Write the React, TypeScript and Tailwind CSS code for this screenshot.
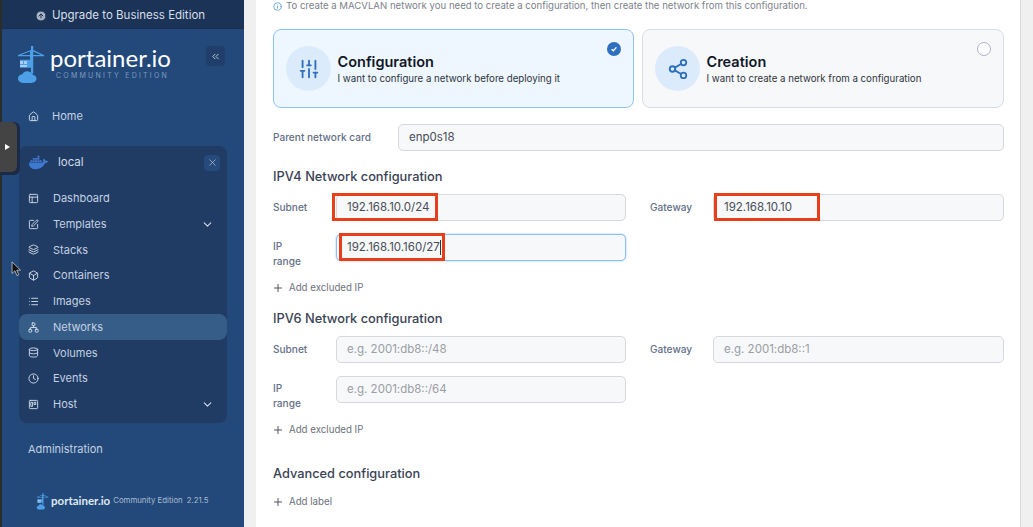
import {
  Box,
  ChevronDown,
  ChevronsLeft,
  CircleArrowUp,
  Clock,
  Database,
  House,
  Info,
  Layers,
  List,
  Network,
  PanelsTopLeft,
  Plus,
  Share2,
  SlidersVertical,
  SquarePen,
  Trello,
  X,
} from 'lucide-react';
import { FaDocker } from 'react-icons/fa';

function CraneLogo({ className }: { className: string }) {
  return (
    <svg viewBox="0 0 28 38" className={className} fill="#4d9fe8">
      <path d="M14 0v4L1 9v1.2h12v3.5H3v8h11v6h2.2V10.2H27V9L16.200 4V0zM4 9l9-3.600V9zM16.200 5.400 24 9h-7.800z" />
      <path d="M3 15h3v3H3zM7 15h3v3H7zM3 19h7v2H3z" fill="#a9cdf0" />
      <path d="M7 37c-3.500 0-6-1.800-6-4.500 0-2.400 2-4 4.300-4.200C6.500 26 9 25 11.500 25.500c2 .4 3.500 1.600 4.100 3.200 2.200.2 3.900 1.800 3.900 3.900 0 2.600-2.300 4.400-5.500 4.400z" />
    </svg>
  );
}

function NavItem({
  icon: Icon,
  label,
  active,
  chevron,
}: {
  icon: typeof Box;
  label: string;
  active?: boolean;
  chevron?: boolean;
}) {
  return (
    <div
      className={`flex items-center h-[25.750px] pl-[9px] pr-[13px] rounded-lg ${active ? 'bg-[#365d88]' : ''}`}
    >
      <Icon className="w-[11px] h-[11px] text-[#d3deea]" strokeWidth={2} />
      <span className="ml-[14px] text-[11px] text-[#c3d1e2]">{label}</span>
      {chevron && <ChevronDown className="w-[13px] h-[13px] ml-auto text-[#d5deea]" />}
    </div>
  );
}

function Sidebar() {
  return (
    <aside className="w-[242px] shrink-0 bg-[#23497a] flex flex-col">
      <div className="h-[29px] pt-[4px] pr-[6px] bg-[#1b3356] border-b border-[#1a2f50] flex items-center justify-center gap-[5px] text-[11.500px] text-[#d6dfe9]">
        <CircleArrowUp className="w-[12px] h-[12px] text-[#1b3356] fill-[#a9b5c5]" />
        Upgrade to Business Edition
      </div>

      <div className="flex items-start pl-[15px] pr-[19px] mt-[17px] h-[40px]">
        <CraneLogo className="w-[28px] h-[38px]" />
        <div className="ml-[5px] flex flex-col items-start">
          <span className="font-['Lato',sans-serif] text-[24px] leading-[26px] text-white -mt-[1px]">portainer.io</span>
          <span className="text-[7px] leading-[9px] tracking-[0.320em] text-[#7e9ac0] ml-[6px] whitespace-nowrap">COMMUNITY EDITION</span>
        </div>
        <button className="ml-auto w-[19px] h-[20px] rounded bg-[#1f3e69] flex items-center justify-center">
          <ChevronsLeft className="w-[11px] h-[11px] text-[#c6d3e3]" />
        </button>
      </div>

      <div className="flex items-center pl-[26px] mt-[17px] h-[26px]">
        <House className="w-[11px] h-[11px] text-[#d3deea]" />
        <span className="ml-[13px] text-[11px] text-[#c3d1e2]">Home</span>
      </div>

      <div className="mx-[17px] mt-[17px] h-[277px] bg-[#203c64] rounded-lg">
        <div className="flex items-center h-[33px] mb-[6.500px] pl-[10px] pr-[7px]">
          <FaDocker className="w-[19px] h-[19px] text-[#3f78d0]" />
          <span className="ml-[10px] text-[11.500px] text-[#d0dbe8]">local</span>
          <span className="ml-auto w-[16px] h-[16px] rounded bg-[#264a7c] flex items-center justify-center">
            <X className="w-[11px] h-[11px] text-[#b9c8da]" strokeWidth={1.5} />
          </span>
        </div>
        <NavItem icon={PanelsTopLeft} label="Dashboard" />
        <NavItem icon={SquarePen} label="Templates" chevron />
        <NavItem icon={Layers} label="Stacks" />
        <NavItem icon={Box} label="Containers" />
        <NavItem icon={List} label="Images" />
        <NavItem icon={Network} label="Networks" active />
        <NavItem icon={Database} label="Volumes" />
        <NavItem icon={Clock} label="Events" />
        <NavItem icon={Trello} label="Host" chevron />
      </div>

      <div className="pl-[26px] mt-[17px] text-[11px] leading-[18px] text-[#c3d1e2]">Administration</div>

      <div className="flex items-center pl-[34px] mt-[34px] h-[18px]">
        <CraneLogo className="w-[13px] h-[17px]" />
        <span className="ml-[2px] font-['Lato',sans-serif] font-bold text-[11.500px] text-[#dfe7f0]">portainer.io</span>
        <span className="ml-[3px] text-[7.800px] text-[#a9bbd2]">Community Edition</span>
        <span className="ml-[4px] text-[7.800px] text-[#a9bbd2]">2.21.5</span>
      </div>
    </aside>
  );
}

function OptionCard({
  icon: Icon,
  title,
  subtitle,
  selected,
}: {
  icon: typeof Box;
  title: string;
  subtitle: string;
  selected?: boolean;
}) {
  return (
    <div
      className={`relative h-[79px] rounded-lg border flex items-center pl-[12px] ${
        selected ? 'bg-[#eef6ff] border-[#8cc4f5]' : 'bg-[#f7f8fa] border-[#d9dde5]'
      }`}
    >
      <div className="w-[45px] h-[45px] rounded-full bg-[#dcebfc] flex items-center justify-center">
        <Icon className="w-[22px] h-[22px] text-[#2f6fc0]" strokeWidth={2} />
      </div>
      <div className="ml-[6.500px]">
        <div className="text-[14.500px] leading-[20px] font-semibold text-[#111827]">{title}</div>
        <div className="text-[9.700px] leading-[14px] text-[#2f343d]">{subtitle}</div>
      </div>
      {selected ? (
        <span className="absolute right-[12px] top-[12px] w-[14px] h-[14px] rounded-full bg-[#2f6fc0] flex items-center justify-center">
          <svg viewBox="0 0 10 10" className="w-[8px] h-[8px]" fill="none" stroke="white" strokeWidth="1.600">
            <path d="M2 5.200 4.200 7.200 8 3" />
          </svg>
        </span>
      ) : (
        <span className="absolute right-[12px] top-[12px] w-[14px] h-[14px] rounded-full bg-white border border-[#aeb4c0]" />
      )}
    </div>
  );
}

function Field({
  label,
  value,
  placeholder,
  focused,
  wrap,
  labelWidth = 'w-[63px]',
}: {
  label: string;
  value?: string;
  placeholder?: string;
  focused?: boolean;
  wrap?: boolean;
  labelWidth?: string;
}) {
  return (
    <div className="flex items-start h-[27px]">
      <div className={`${labelWidth} shrink-0 text-[10.100px] font-medium text-[#646f87] ${wrap ? 'leading-[14.500px] pt-[5px] pr-[30px]' : 'leading-[27px]'}`}>
        {label}
      </div>
      <div
        className={`flex-1 h-[27px] rounded-[5px] bg-[#f7f8fa] border flex items-center pl-[10px] text-[11.500px] ${
          focused ? 'border-[#8cc0f3] shadow-[0_0_2px_#8cc0f3]' : 'border-[#d6d8dd]'
        } ${value ? 'text-[#474d58]' : 'text-[#9b9ea5]'}`}
      >
        {value ?? placeholder}
        {focused && <span className="w-px h-[15px] bg-[#333]" />}
      </div>
    </div>
  );
}

function AddLink({ label }: { label: string }) {
  return (
    <div className="flex items-center h-[14px] text-[9.700px] text-[#6c717b]">
      <Plus className="w-[12px] h-[12px] -ml-[1px] text-[#4e535c] mr-[5px]" />
      {label}
    </div>
  );
}

function Heading({ children }: { children: string }) {
  return <h3 className="text-[12.800px] leading-[18px] font-medium text-[#3a4255]">{children}</h3>;
}

function RedBox({ className }: { className: string }) {
  return <div className={`absolute border-[3px] border-[#e83f1b] ${className}`} />;
}

export default function App() {
  return (
    <div className="relative w-[1033px] h-[527px] overflow-hidden flex bg-[#f0f0f0] font-['Inter',sans-serif]">
      <div className="w-[2px] shrink-0 bg-[#2c2c2c]" />
      <Sidebar />

      <main className="ml-[12px] w-[765px] shrink-0 bg-white border-r border-[#d8d8d8] pl-[17px] pr-[16px]">
        <div className="flex items-center h-[11px] mt-[1px] text-[9.600px] text-[#7d828c]">
          <Info className="w-[9px] h-[9px] text-[#4a90d9] mr-[4px]" />
          To create a MACVLAN network you need to create a configuration, then create the network from this configuration.
        </div>

        <div className="grid grid-cols-[361px_1fr] gap-x-[8px] mt-[17px]">
          <OptionCard icon={SlidersVertical} title="Configuration" subtitle="I want to configure a network before deploying it" selected />
          <OptionCard icon={Share2} title="Creation" subtitle="I want to create a network from a configuration" />
        </div>

        <div className="mt-[16px]">
          <Field label="Parent network card" value="enp0s18" labelWidth="w-[125px]" />
        </div>

        <div className="mt-[17px]">
          <Heading>IPV4 Network configuration</Heading>
        </div>
        <div className="grid grid-cols-[353px_1fr] gap-x-[24px] mt-[8px]">
          <Field label="Subnet" value="192.168.10.0/24" />
          <Field label="Gateway" value="192.168.10.10" />
        </div>
        <div className="grid grid-cols-[353px_1fr] gap-x-[24px] mt-[13px]">
          <Field label="IP range" value="192.168.10.160/27" focused wrap />
        </div>
        <div className="mt-[20px]">
          <AddLink label="Add excluded IP" />
        </div>

        <div className="mt-[15px]">
          <Heading>IPV6 Network configuration</Heading>
        </div>
        <div className="grid grid-cols-[353px_1fr] gap-x-[24px] mt-[8px]">
          <Field label="Subnet" placeholder="e.g. 2001:db8::/48" />
          <Field label="Gateway" placeholder="e.g. 2001:db8::1" />
        </div>
        <div className="grid grid-cols-[353px_1fr] gap-x-[24px] mt-[13px]">
          <Field label="IP range" placeholder="e.g. 2001:db8::/64" wrap />
        </div>
        <div className="mt-[20px]">
          <AddLink label="Add excluded IP" />
        </div>

        <div className="mt-[28px]">
          <Heading>Advanced configuration</Heading>
        </div>
        <div className="mt-[12px]">
          <AddLink label="Add label" />
        </div>
      </main>

      {/* annotations and the collapsed handle sit on top of the page */}
      <RedBox className="left-[332px] top-[193px] w-[106px] h-[28px]" />
      <RedBox className="left-[714px] top-[193px] w-[106px] h-[28px]" />
      <RedBox className="left-[339px] top-[233px] w-[106px] h-[28px]" />

      <div className="absolute left-0 top-[122px] w-[20px] h-[53px] rounded-r-md bg-[#1b2b47]">
        <div className="w-[17px] h-[50px] rounded-r-md bg-[#444444] flex items-center justify-center pr-[2px]">
          <span className="w-0 h-0 border-y-[3.500px] border-y-transparent border-l-[5px] border-l-white" />
        </div>
      </div>

      <svg viewBox="0 0 12 18" className="absolute left-[11px] top-[261px] w-[11px] h-[16px]">
        <path d="M1 1v13l3.200-3 2.300 5.500 2-.9L6.300 10.300H10.500z" fill="#111" stroke="#ddd" strokeWidth="0.800" />
      </svg>
    </div>
  );
}
